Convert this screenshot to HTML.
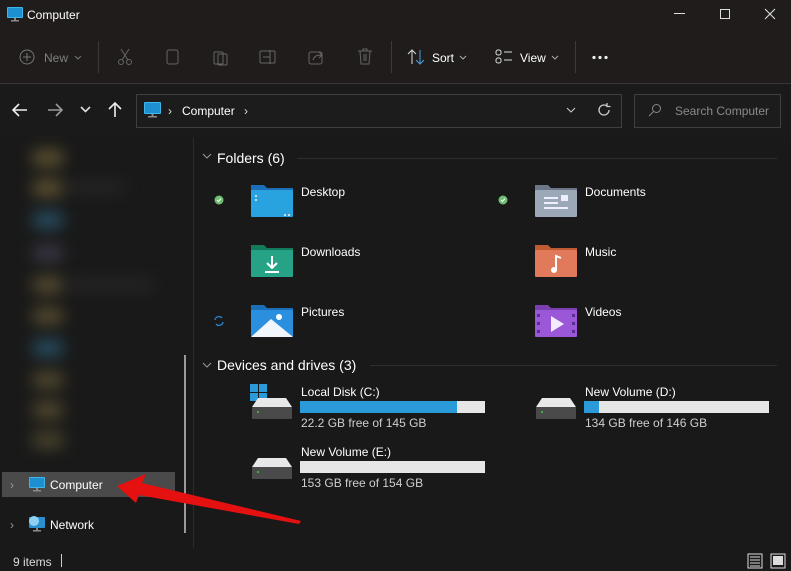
<!DOCTYPE html>
<html><head><meta charset="utf-8"><style>
*{margin:0;padding:0;box-sizing:border-box}
body{width:791px;height:571px;background:#191919;font-family:"Liberation Sans",sans-serif;color:#fff;position:relative;overflow:hidden;font-size:12px}
.a{position:absolute}
.t{position:absolute;white-space:nowrap}
.blob{position:absolute;filter:blur(8px);border-radius:4px;opacity:.75}
.bar{position:absolute;height:12px;background:#e6e6e6}
.bar i{display:block;height:100%;background:#2b9ad8}
.sub{color:#cfcfcf;font-size:12px}
</style></head><body>
<div class="a" style="left:0;top:0;width:791px;height:84px;background:#1f1c1b"></div>
<div class="a" style="left:0;top:83px;width:791px;height:1px;background:#3a3635"></div>
<div class="a" style="left:0;top:84px;width:791px;height:54px;background:#1a1a1a"></div>
<svg class="a" style="left:7px;top:7px" width="16" height="15"><rect x="0" y="0" width="16" height="11" rx="1" fill="#3fb6e8"/><rect x="1" y="1" width="14" height="9" fill="#1e8fd0"/><rect x="7" y="11" width="2" height="2" fill="#8a8a8a"/><rect x="4" y="13" width="8" height="1.5" fill="#8a8a8a"/></svg>
<div class="t" style="left:27px;top:8px;font-size:12px">Computer</div>
<div class="a" style="left:674px;top:13px;width:11px;height:1px;background:#ddd"></div>
<div class="a" style="left:720px;top:9px;width:10px;height:10px;border:1px solid #ddd"></div>
<svg class="a" style="left:764px;top:8px" width="12" height="12"><path d="M1 1L11 11M11 1L1 11" stroke="#ddd" stroke-width="1.1"/></svg>
<svg class="a" style="left:19px;top:49px" width="16" height="16"><circle cx="8" cy="8" r="7" stroke="#777" fill="none"/><path d="M8 4v8M4 8h8" stroke="#777"/></svg>
<div class="t" style="left:44px;top:51px;color:#808080">New</div>
<svg class="a" style="left:74px;top:55px" width="8" height="5"><path d="M1 1l3 3 3-3" stroke="#777" fill="none"/></svg>
<div class="a" style="left:98px;top:41px;width:1px;height:32px;background:#3a3a3a"></div>
<svg class="a" style="left:117px;top:48px" width="16" height="18"><path d="M4 1l7 11M12 1L5 12" stroke="#666" fill="none"/><circle cx="4" cy="14" r="2.5" stroke="#666" fill="none"/><circle cx="12" cy="14" r="2.5" stroke="#666" fill="none"/></svg>
<svg class="a" style="left:166px;top:49px" width="14" height="17"><rect x="1" y="1" width="11" height="14" rx="2" stroke="#666" fill="none"/></svg>
<svg class="a" style="left:213px;top:49px" width="16" height="17"><rect x="1" y="3" width="9" height="12" rx="1" stroke="#666" fill="none"/><rect x="5" y="5" width="9" height="11" rx="1" stroke="#666" fill="none"/></svg>
<svg class="a" style="left:259px;top:49px" width="18" height="16"><rect x="1" y="2" width="15" height="12" rx="1" stroke="#666" fill="none"/><path d="M4 8h7M11 1v14" stroke="#666"/></svg>
<svg class="a" style="left:308px;top:49px" width="17" height="16"><rect x="1" y="3" width="13" height="12" rx="2" stroke="#666" fill="none"/><path d="M5 11c1-4 4-5 9-5M11 3l3 3-3 3" stroke="#666" fill="none"/></svg>
<svg class="a" style="left:357px;top:48px" width="16" height="18"><path d="M1 3h14M6 3V1h4v2M3 3l1 13h8l1-13M7 6v7M9 6v7" stroke="#666" fill="none"/></svg>
<div class="a" style="left:391px;top:41px;width:1px;height:32px;background:#3a3a3a"></div>
<svg class="a" style="left:407px;top:49px" width="18" height="16"><path d="M5 15V2M1 5l4-4 4 4" stroke="#ddd" fill="none"/><path d="M13 1v13M9 11l4 4 4-4" stroke="#4aa3df" fill="none"/></svg>
<div class="t" style="left:432px;top:51px">Sort</div>
<svg class="a" style="left:459px;top:55px" width="8" height="5"><path d="M1 1l3 3 3-3" stroke="#aaa" fill="none"/></svg>
<svg class="a" style="left:495px;top:49px" width="18" height="16"><rect x="1" y="1" width="5" height="5" rx="2" stroke="#ddd" fill="none"/><rect x="1" y="9" width="5" height="5" rx="2" stroke="#ddd" fill="none"/><path d="M9 3h8M9 11h8" stroke="#ddd"/></svg>
<div class="t" style="left:520px;top:51px">View</div>
<svg class="a" style="left:551px;top:55px" width="8" height="5"><path d="M1 1l3 3 3-3" stroke="#aaa" fill="none"/></svg>
<div class="a" style="left:575px;top:41px;width:1px;height:32px;background:#3a3a3a"></div>
<svg class="a" style="left:591px;top:55px" width="18" height="5"><circle cx="3" cy="2.5" r="1.6" fill="#eee"/><circle cx="9" cy="2.5" r="1.6" fill="#eee"/><circle cx="15" cy="2.5" r="1.6" fill="#eee"/></svg>
<svg class="a" style="left:12px;top:103px" width="16" height="14"><path d="M15 7H2M7 1L1 7l6 6" stroke="#eee" stroke-width="1.6" fill="none"/></svg>
<svg class="a" style="left:47px;top:103px" width="16" height="14"><path d="M1 7h13M9 1l6 6-6 6" stroke="#999" stroke-width="1.6" fill="none"/></svg>
<svg class="a" style="left:80px;top:106px" width="11" height="7"><path d="M1 1l4.5 4.5L10 1" stroke="#ddd" stroke-width="1.6" fill="none"/></svg>
<svg class="a" style="left:108px;top:102px" width="14" height="16"><path d="M7 15V2M1 7l6-6 6 6" stroke="#eee" stroke-width="1.6" fill="none"/></svg>
<div class="a" style="left:136px;top:94px;width:486px;height:34px;border:1px solid #3f3f3f;background:#1c1c1c"></div>
<svg class="a" style="left:144px;top:102px" width="18" height="17"><rect x="0" y="0" width="17" height="12" rx="1" fill="#3fb6e8"/><rect x="1" y="1" width="15" height="10" fill="#1e8fd0"/><rect x="7.5" y="12" width="2" height="2" fill="#8a8a8a"/><rect x="4" y="14" width="9" height="1.5" fill="#8a8a8a"/></svg>
<div class="t" style="left:168px;top:104px;color:#ddd">›</div>
<div class="t" style="left:182px;top:104px">Computer</div>
<div class="t" style="left:244px;top:104px;color:#ddd">›</div>
<svg class="a" style="left:566px;top:107px" width="10" height="6"><path d="M1 1l4 4 4-4" stroke="#ccc" fill="none"/></svg>
<svg class="a" style="left:597px;top:103px" width="14" height="14"><path d="M12 7a5 5 0 1 1-2-4M10 0v3.5h3.5" stroke="#ccc" stroke-width="1.3" fill="none"/></svg>
<div class="a" style="left:634px;top:94px;width:147px;height:34px;border:1px solid #3f3f3f;background:#1c1c1c"></div>
<svg class="a" style="left:648px;top:103px" width="14" height="14"><circle cx="8.5" cy="5.5" r="4" stroke="#888" fill="none"/><path d="M5.5 8.5L1 13" stroke="#888"/></svg>
<div class="t" style="left:675px;top:104px;color:#8a8a8a">Search Computer</div>
<div class="a" style="left:193px;top:138px;width:1px;height:410px;background:#2c2c2c"></div>
<div class="blob" style="left:33px;top:150px;width:30px;height:16px;background:#7a6a3a"></div>
<div class="blob" style="left:33px;top:180px;width:30px;height:16px;background:#7a6a3a"></div><div class="blob" style="left:65px;top:182px;width:60px;height:10px;background:#2e2e2e"></div>
<div class="blob" style="left:33px;top:212px;width:30px;height:16px;background:#2f6580"></div>
<div class="blob" style="left:33px;top:245px;width:30px;height:16px;background:#445"></div>
<div class="blob" style="left:33px;top:277px;width:30px;height:16px;background:#6f613a"></div><div class="blob" style="left:65px;top:280px;width:90px;height:10px;background:#2e2e2e"></div>
<div class="blob" style="left:33px;top:308px;width:30px;height:16px;background:#6f613a"></div>
<div class="blob" style="left:33px;top:340px;width:30px;height:16px;background:#2f6580"></div>
<div class="blob" style="left:33px;top:372px;width:30px;height:16px;background:#6a5d38"></div>
<div class="blob" style="left:33px;top:402px;width:30px;height:16px;background:#6a5d38"></div>
<div class="blob" style="left:33px;top:432px;width:30px;height:16px;background:#5f5535"></div>
<div class="a" style="left:184px;top:355px;width:2px;height:178px;background:#9a9a9a"></div>
<div class="a" style="left:2px;top:472px;width:173px;height:25px;background:#4a4a4a"></div>
<div class="t" style="left:10px;top:478px;color:#999">›</div>
<svg class="a" style="left:29px;top:477px" width="17" height="16"><rect x="0" y="0" width="16" height="11" rx="1" fill="#3fb6e8"/><rect x="1" y="1" width="14" height="9" fill="#1e8fd0"/><rect x="7" y="11" width="2" height="2" fill="#8a8a8a"/><rect x="4" y="13" width="8" height="1.5" fill="#8a8a8a"/></svg>
<div class="t" style="left:50px;top:478px">Computer</div>
<div class="t" style="left:10px;top:518px;color:#999">›</div>
<svg class="a" style="left:28px;top:515px" width="18" height="17"><rect x="1" y="2" width="16" height="11" rx="1" fill="#2a8fcf"/><circle cx="6" cy="6" r="5" fill="#8fd0f0"/><rect x="8" y="13" width="2" height="2" fill="#8a8a8a"/><rect x="5" y="15" width="8" height="1.5" fill="#8a8a8a"/></svg>
<div class="t" style="left:50px;top:518px">Network</div>
<div class="t" style="left:13px;top:555px;color:#ddd">9 items</div>
<div class="a" style="left:61px;top:554px;width:1px;height:13px;background:#ccc"></div>
<svg class="a" style="left:747px;top:553px" width="40" height="16"><rect x="1" y="1" width="14" height="14" stroke="#ddd" fill="none"/><path d="M3 4h10M3 7h10M3 10h10M3 13h10" stroke="#ddd"/><rect x="24" y="1" width="14" height="14" stroke="#ddd" fill="none"/><rect x="26" y="3" width="10" height="9" fill="#ddd"/></svg>
<svg class="a" style="left:202px;top:153px" width="10" height="6"><path d="M1 1l4 4 4-4" stroke="#999" fill="none"/></svg>
<div class="t" style="left:217px;top:150px;font-size:14px">Folders (6)</div>
<div class="a" style="left:297px;top:158px;width:480px;height:1px;background:#2e2e2e"></div>
<svg class="a" style="left:214px;top:195px" width="10" height="10"><circle cx="5" cy="5" r="4.5" fill="#6fbf73"/><path d="M3 5l1.5 1.5L7 3.5" stroke="#fff" fill="none"/></svg>
<svg class="a" style="left:498px;top:195px" width="10" height="10"><circle cx="5" cy="5" r="4.5" fill="#6fbf73"/><path d="M3 5l1.5 1.5L7 3.5" stroke="#fff" fill="none"/></svg>
<svg class="a" style="left:213px;top:315px" width="12" height="12"><path d="M2 5a4 4 0 0 1 7-2M10 7a4 4 0 0 1-7 2" stroke="#2b7fc6" stroke-width="1.4" fill="none"/></svg>
<svg class="a" style="left:250px;top:182px" width="44" height="36"><path d="M1 3h13l3 3h26v28H1z" fill="#1a6fb6"/><rect x="1" y="8" width="42" height="27" rx="1" fill="#29a3e0"/><rect x="5" y="13" width="2" height="2" fill="#cde"/><rect x="5" y="17" width="2" height="2" fill="#cde"/><rect x="34" y="32" width="2" height="2" fill="#cde"/><rect x="38" y="32" width="2" height="2" fill="#cde"/></svg>
<div class="t" style="left:301px;top:185px">Desktop</div>
<svg class="a" style="left:534px;top:182px" width="44" height="36"><path d="M1 3h13l3 3h26v28H1z" fill="#6c7888"/><rect x="1" y="8" width="42" height="27" rx="1" fill="#9aa8b8"/><path d="M10 16h14M10 21h14M10 26h24" stroke="#eef" stroke-width="2"/><rect x="27" y="13" width="7" height="6" fill="#eef"/></svg>
<div class="t" style="left:585px;top:185px">Documents</div>
<svg class="a" style="left:250px;top:242px" width="44" height="36"><path d="M1 3h13l3 3h26v28H1z" fill="#157a5c"/><rect x="1" y="8" width="42" height="27" rx="1" fill="#26a386"/><path d="M22 14v12M17 21l5 5 5-5M15 30h14" stroke="#fff" stroke-width="2" fill="none"/></svg>
<div class="t" style="left:301px;top:245px">Downloads</div>
<svg class="a" style="left:534px;top:242px" width="44" height="36"><path d="M1 3h13l3 3h26v28H1z" fill="#c05a30"/><rect x="1" y="8" width="42" height="27" rx="1" fill="#e07a5a"/><path d="M22 28V14l5 2" stroke="#fff" stroke-width="2" fill="none"/><circle cx="20" cy="28" r="3" fill="#fff"/></svg>
<div class="t" style="left:585px;top:245px">Music</div>
<svg class="a" style="left:250px;top:302px" width="44" height="36"><path d="M1 3h13l3 3h26v28H1z" fill="#1a6fb6"/><rect x="1" y="8" width="42" height="27" rx="1" fill="#2b8fe0"/><path d="M1 35l20-18 22 18z" fill="#f0f6fb"/><circle cx="29" cy="15" r="3" fill="#fff"/></svg>
<div class="t" style="left:301px;top:305px">Pictures</div>
<svg class="a" style="left:534px;top:302px" width="44" height="36"><path d="M1 3h13l3 3h26v28H1z" fill="#7a3fb0"/><rect x="1" y="8" width="42" height="27" rx="1" fill="#9a58d8"/><path d="M17 14v16l13-8z" fill="#f3eaff"/><rect x="3" y="12" width="3" height="3" fill="#5a2c90"/><rect x="3" y="20" width="3" height="3" fill="#5a2c90"/><rect x="3" y="28" width="3" height="3" fill="#5a2c90"/><rect x="38" y="12" width="3" height="3" fill="#5a2c90"/><rect x="38" y="20" width="3" height="3" fill="#5a2c90"/><rect x="38" y="28" width="3" height="3" fill="#5a2c90"/></svg>
<div class="t" style="left:585px;top:305px">Videos</div>
<svg class="a" style="left:202px;top:362px" width="10" height="6"><path d="M1 1l4 4 4-4" stroke="#999" fill="none"/></svg>
<div class="t" style="left:217px;top:357px;font-size:14px">Devices and drives (3)</div>
<div class="a" style="left:370px;top:365px;width:407px;height:1px;background:#2e2e2e"></div>
<svg class="a" style="left:250px;top:384px" width="44" height="38"><rect x="0" y="0" width="8" height="8" fill="#2b9ad8"/><rect x="9" y="0" width="8" height="8" fill="#2b9ad8"/><rect x="0" y="9" width="8" height="8" fill="#2b9ad8"/><rect x="9" y="9" width="8" height="8" fill="#2b9ad8"/><path d="M8 14h28l6 9H2z" fill="#e8e8e8"/><rect x="2" y="23" width="40" height="12" rx="1" fill="#4a4a4a"/><circle cx="8" cy="28" r="1" fill="#4c4"/></svg>
<div class="t" style="left:301px;top:385px">Local Disk (C:)</div>
<div class="bar" style="left:300px;top:401px;width:185px"><i style="width:157px"></i></div>
<div class="t sub" style="left:301px;top:416px">22.2 GB free of 145 GB</div>
<svg class="a" style="left:534px;top:384px" width="44" height="38"><path d="M8 14h28l6 9H2z" fill="#e8e8e8"/><rect x="2" y="23" width="40" height="12" rx="1" fill="#4a4a4a"/><circle cx="8" cy="28" r="1" fill="#4c4"/></svg>
<div class="t" style="left:585px;top:385px">New Volume (D:)</div>
<div class="bar" style="left:584px;top:401px;width:185px"><i style="width:15px"></i></div>
<div class="t sub" style="left:585px;top:416px">134 GB free of 146 GB</div>
<svg class="a" style="left:250px;top:444px" width="44" height="38"><path d="M8 14h28l6 9H2z" fill="#e8e8e8"/><rect x="2" y="23" width="40" height="12" rx="1" fill="#4a4a4a"/><circle cx="8" cy="28" r="1" fill="#4c4"/></svg>
<div class="t" style="left:301px;top:445px">New Volume (E:)</div>
<div class="bar" style="left:300px;top:461px;width:185px"></div>
<div class="t sub" style="left:301px;top:476px">153 GB free of 154 GB</div>
<svg class="a" style="left:0;top:0" width="791" height="571"><path d="M117 486L146 474L142 483L301 521L299 524L139 495L136 503Z" fill="#e51010"/></svg>
</body></html>
